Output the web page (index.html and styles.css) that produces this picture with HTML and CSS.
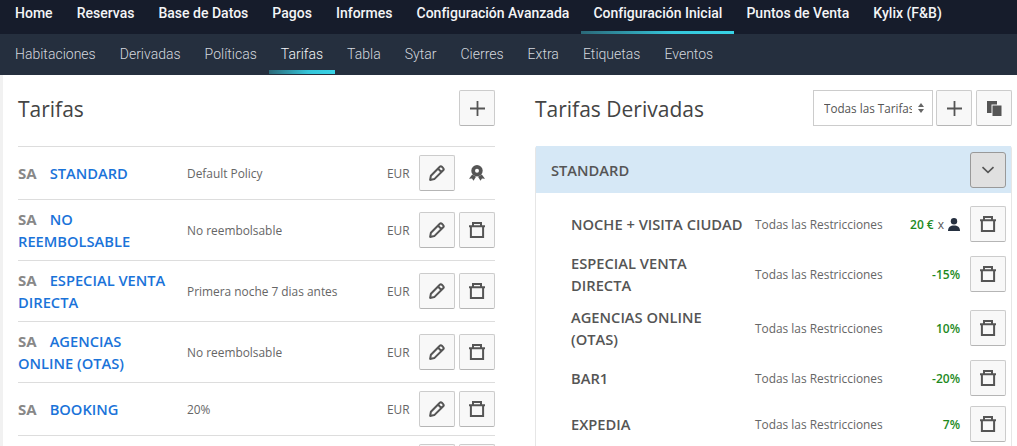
FILE: index.html
```html
<!DOCTYPE html>
<html lang="es">
<head>
<meta charset="utf-8">
<title>Tarifas</title>
<link rel="stylesheet" href="styles.css">
</head>
<body>
<svg class="sprites" width="0" height="0" aria-hidden="true">
  <symbol id="i-plus" viewBox="0 0 15 15"><path d="M7.500 0v15M0 7.500h15" fill="none" stroke="currentColor" stroke-width="1.800"/></symbol>
  <symbol id="i-edit" viewBox="0 0 16 16"><path d="M1.100 14.900l.8-4.200L10.800 1.800a1.500 1.500 0 0 1 2.100 0l1.300 1.300a1.500 1.500 0 0 1 0 2.100L5.300 14.100zM9 3.600l3.400 3.400" fill="none" stroke="currentColor" stroke-width="2" stroke-linejoin="round"/></symbol>
  <symbol id="i-trash" viewBox="0 0 16 16"><path d="M0 4.200h16M4 4V1h8V4M1.900 5v10h12.200V5" fill="none" stroke="currentColor" stroke-width="2"/></symbol>
</svg>
<nav class="topnav">
  <a>Home</a><a>Reservas</a><a>Base de Datos</a><a>Pagos</a><a>Informes</a><a>Configuración Avanzada</a><a class="active">Configuración Inicial</a><a>Puntos de Venta</a><a>Kylix (F&amp;B)</a>
</nav>
<nav class="subnav">
  <a>Habitaciones</a><a>Derivadas</a><a>Políticas</a><a class="active">Tarifas</a><a>Tabla</a><a>Sytar</a><a>Cierres</a><a>Extra</a><a>Etiquetas</a><a>Eventos</a>
</nav>
<main class="page">
  <section class="left">
    <header class="head">
      <h1>Tarifas</h1>
      <button class="btn"><svg class="ic-plus"><use href="#i-plus"/></svg></button>
    </header>
    <div class="rate">
      <div class="rate-name"><b>SA</b><a>STANDARD</a></div><span class="small">Default Policy</span><span class="small">EUR</span>
      <button class="btn"><svg class="ic"><use href="#i-edit"/></svg></button>
      <span class="badge"><svg viewBox="0 0 16 16" width="16" height="16"><path d="M3.200 9.500L0 13.800l3-.2 1.500 2.200L7 11.800zM12.800 9.500L16 13.800l-3-.2-1.500 2.200L9 11.800z" fill="#555"/><circle cx="8" cy="5.700" r="5.700" fill="#555"/><circle cx="8" cy="5.700" r="2" fill="#fff"/></svg></span>
    </div>
    <div class="rate">
      <div class="rate-name"><b>SA</b><a>NO REEMBOLSABLE</a></div><span class="small">No reembolsable</span><span class="small">EUR</span>
      <button class="btn"><svg class="ic"><use href="#i-edit"/></svg></button>
      <button class="btn"><svg class="ic"><use href="#i-trash"/></svg></button>
    </div>
    <div class="rate">
      <div class="rate-name"><b>SA</b><a>ESPECIAL VENTA DIRECTA</a></div><span class="small">Primera noche 7 dias antes</span><span class="small">EUR</span>
      <button class="btn"><svg class="ic"><use href="#i-edit"/></svg></button>
      <button class="btn"><svg class="ic"><use href="#i-trash"/></svg></button>
    </div>
    <div class="rate">
      <div class="rate-name"><b>SA</b><a>AGENCIAS ONLINE (OTAS)</a></div><span class="small">No reembolsable</span><span class="small">EUR</span>
      <button class="btn"><svg class="ic"><use href="#i-edit"/></svg></button>
      <button class="btn"><svg class="ic"><use href="#i-trash"/></svg></button>
    </div>
    <div class="rate">
      <div class="rate-name"><b>SA</b><a>BOOKING</a></div><span class="small">20%</span><span class="small">EUR</span>
      <button class="btn"><svg class="ic"><use href="#i-edit"/></svg></button>
      <button class="btn"><svg class="ic"><use href="#i-trash"/></svg></button>
    </div>
    <div class="rate">
      <div class="rate-name"></div><span></span><span></span>
      <button class="btn"></button>
      <button class="btn"></button>
    </div>
  </section>
  <section class="right">
    <header class="head head-right">
      <h1>Tarifas Derivadas</h1>
      <div class="tools">
        <div class="select"><span class="select-text">Todas las Tarifas</span><svg class="updown" viewBox="0 0 6 10" width="6" height="10"><path d="M3 0l3 4H0zM3 10L0 6h6z" fill="#666"/></svg></div>
        <button class="btn"><svg class="ic-plus"><use href="#i-plus"/></svg></button>
        <button class="btn"><svg viewBox="0 0 15 15" width="15" height="15"><path d="M0 0h10v3.500H4.500V12H0z" fill="#555"/><path d="M5.500 4.500h9V15h-9z" fill="#555"/></svg></button>
      </div>
    </header>
    <div class="panel">
      <div class="panel-head">
        <span>STANDARD</span>
        <button class="btn btn-open"><svg viewBox="0 0 14 8" width="14" height="8"><path d="M1.500 1.200L7 6.400l5.500-5.200" fill="none" stroke="#555" stroke-width="1.600"/></svg></button>
      </div>
      <div class="panel-body">
        <div class="derived"><strong>NOCHE + VISITA CIUDAD</strong><span class="small">Todas las Restricciones</span><span class="val">20 € <i>x</i> <svg viewBox="0 0 12 13" width="12" height="13"><circle cx="6" cy="3.200" r="3.200" fill="#263040"/><path d="M0 13c0-3.800 2.500-5.500 6-5.500s6 1.700 6 5.500z" fill="#263040"/></svg></span><button class="btn"><svg class="ic"><use href="#i-trash"/></svg></button></div>
        <div class="derived"><strong>ESPECIAL VENTA DIRECTA</strong><span class="small">Todas las Restricciones</span><span class="val">-15%</span><button class="btn"><svg class="ic"><use href="#i-trash"/></svg></button></div>
        <div class="derived"><strong>AGENCIAS ONLINE (OTAS)</strong><span class="small">Todas las Restricciones</span><span class="val">10%</span><button class="btn"><svg class="ic"><use href="#i-trash"/></svg></button></div>
        <div class="derived"><strong>BAR1</strong><span class="small">Todas las Restricciones</span><span class="val">-20%</span><button class="btn"><svg class="ic"><use href="#i-trash"/></svg></button></div>
        <div class="derived"><strong>EXPEDIA</strong><span class="small">Todas las Restricciones</span><span class="val">7%</span><button class="btn"><svg class="ic"><use href="#i-trash"/></svg></button></div>
      </div>
    </div>
  </section>
</main>
</body>
</html>
```
FILE: styles.css
```css
* { box-sizing: border-box; }
html, body { margin: 0; height: 100%; overflow: hidden; }
body { background: #fff; font-family: "Open Sans", sans-serif; color: #555; }
.sprites { position: absolute; }

.topnav, .subnav { display: flex; font-family: Roboto, sans-serif; }
.topnav { height: 34px; background: #161c2b; padding-left: 3px; font-size: 14px; letter-spacing: .012px; }
.topnav a { padding: 0 12px; line-height: 26px; height: 34px; color: #f4f5f7; font-weight: 500; }
.subnav { height: 41px; background: #252f3e; padding-left: 3px; font-size: 14px; font-weight: 300; letter-spacing: .01px; }
.subnav a { padding: 0 12px; line-height: 40px; height: 41px; color: #d4d8de; }
.topnav a.active, .subnav a.active { color: #f4f5f7; position: relative; }
.topnav a.active::after, .subnav a.active::after {
  content: ""; position: absolute; left: 0; right: 0; bottom: 0; height: 3px;
  background: linear-gradient(90deg, #2b6878, #35c6da 60%, #38d3e6);
}
.subnav a.active::after { bottom: 1px; height: 4px; }

.page { display: grid; grid-template-columns: 492px 1fr; padding-left: 3px; background: #f1f1f1; height: 371px; overflow: hidden; }
.left { background: #fff; padding: 0 0 0 15px; }
.right { background: #fff; padding: 0 5px 0 40px; }

.head { display: flex; align-items: flex-start; justify-content: space-between; height: 72px; padding-top: 15px; border-bottom: 1px solid #ddd; }
.head-right { height: 71px; border-bottom: 0; }
h1 { margin: 1px 0 0; font-size: 21px; font-weight: 400; color: #444; line-height: 36px; }
.tools { display: flex; gap: 4px; }

.btn {
  display: flex; align-items: center; justify-content: center; flex: none;
  width: 36px; height: 36px; padding: 0; color: #555;
  background: #f8f8f8; border: 1px solid #ccc; border-bottom-color: #b5b5b5; border-radius: 2px;
}
.ic { width: 16px; height: 16px; }
.ic-plus { width: 15px; height: 15px; }

.select {
  display: flex; align-items: center; width: 120px; height: 36px; margin-right: -1px; padding: 0 8px 0 10px;
  border: 1px solid #ccc; font-size: 11.7px; color: #555;
}
.select-text { width: 88px; overflow: hidden; white-space: nowrap; }
.updown { margin-left: 6px; }

.rate {
  display: grid; grid-template-columns: 169px 200px 32px 36px 40px;
  align-items: center; min-height: 53px; padding: 8px 0; border-bottom: 1px solid #ddd;
}
.rate > :nth-child(5) { margin-left: 4px; }
.rate-name { font-size: 14.7px; line-height: 22px; font-weight: 600; padding-right: 10px; }
.rate-name b { font-size: 15px; font-weight: 700; color: #888; margin-right: 13px; }
.rate-name a { color: #1a73d9; }
.small { font-size: 11.9px; color: #666; }
.badge { display: flex; justify-content: center; margin-left: 4px; }

.panel { border: solid #e6e6e6; border-width: 0 1px; border-radius: 3px 3px 0 0; }
.panel-head {
  display: flex; align-items: center; justify-content: space-between;
  height: 47px; padding: 1px 5px 0 15px; background: #d6e8f6;
  font-size: 14.7px; font-weight: 600; color: #555;
}
.btn-open { background: #e0e0e0; border-color: #999; border-radius: 3px; }
.panel-body { display: flex; flex-direction: column; gap: 10px; padding: 13px 5px 30px 35px; }
.derived { display: grid; grid-template-columns: 174px 1fr auto 36px; align-items: center; column-gap: 10px; }
.derived strong { font-size: 14.7px; font-weight: 600; line-height: 22px; color: #555; }
.val { font-size: 12px; font-weight: 600; color: #1e8a1e; display: flex; align-items: center; gap: 4px; }
.val i { font-style: normal; font-weight: 400; color: #555; }
```
